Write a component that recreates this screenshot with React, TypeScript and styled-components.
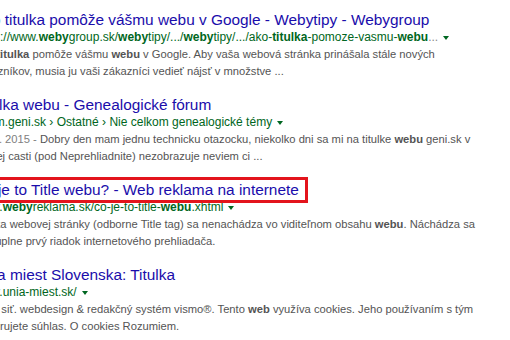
import * as React from 'react'
import styled, { createGlobalStyle, css } from 'styled-components'

const GlobalStyle = createGlobalStyle`
  html, body {
    margin: 0;
    padding: 0;
    background: #fff;
    overflow: hidden;
  }

  body {
    font-family: 'Liberation Sans', Arial, sans-serif;
  }
`

const Results = styled.div`
  padding-top: 11px;
  margin-left: -26px;
  white-space: nowrap;
`

const Result = styled.div`
  margin-bottom: 16px;
`

const Title = styled.h3<{ $marked?: boolean }>`
  display: inline-block;
  position: relative;
  margin: 0;
  font-size: 15.4px;
  font-weight: normal;
  line-height: 17px;
  color: #1a0dab;
  vertical-align: top;

  ${p =>
    p.$marked &&
    css`
      &::after {
        content: '';
        position: absolute;
        top: -4px;
        bottom: -5px;
        left: -10px;
        right: -9px;
        border: 3px solid #e3141c;
      }
    `}
`

const Cite = styled.div`
  font-size: 12px;
  line-height: 17px;
  color: #006621;

  b {
    font-weight: bold;
  }
`

const Dots = styled.span`
  color: #8a8a8a;
`

const Arrow = styled.span`
  display: inline-block;
  margin-left: 5px;
  vertical-align: middle;
  border-top: 4px solid #006621;
  border-left: 3.5px solid transparent;
  border-right: 3.5px solid transparent;
`

const Snippet = styled.div`
  font-size: 11.2px;
  line-height: 17px;
  color: #545454;

  b {
    font-weight: bold;
  }
`

const DateText = styled.span`
  color: #808080;
`

interface ResultData {
  title: string
  marked?: boolean
  url: React.ReactNode
  lines: React.ReactNode[]
}

const results: ResultData[] = [
  {
    title: 'Ako titulka pomôže vášmu webu v Google - Webytipy - Webygroup',
    url: (
      <>
        https://www.<b>weby</b>group.sk/<b>weby</b>tipy/.../<b>weby</b>tipy/.../ako-<b>titulka</b>-pomoze-vasmu-
        <b>webu</b>
        <Dots>...</Dots>
      </>
    ),
    lines: [
      <>
        Ako <b>titulka</b> pomôže vášmu <b>webu</b> v Google. Aby vaša webová stránka prinášala stále nových
      </>,
      <>zákazníkov, musia ju vaši zákazníci vedieť nájsť v množstve ...</>
    ]
  },
  {
    title: 'Titulka webu - Genealogické fórum',
    url: <>forum.geni.sk › Ostatné › Nie celkom genealogické témy</>,
    lines: [
      <>
        <DateText>27. 5. 2015 - </DateText>Dobry den mam jednu technicku otazocku, niekolko dni sa mi na titulke{' '}
        <b>webu</b> geni.sk v
      </>,
      <>hornej casti (pod Neprehliadnite) nezobrazuje neviem ci ...</>
    ]
  },
  {
    title: 'Čo je to Title webu? - Web reklama na internete',
    marked: true,
    url: (
      <>
        www.<b>weby</b>reklama.sk/co-je-to-title-<b>webu</b>.xhtml
      </>
    ),
    lines: [
      <>
        Titulka webovej stránky (odborne Title tag) sa nenachádza vo viditeľnom obsahu <b>webu</b>. Náchádza sa
      </>,
      <>ako úplne prvý riadok internetového prehliadača.</>
    ]
  },
  {
    title: 'Únia miest Slovenska: Titulka',
    url: <>www.unia-miest.sk/</>,
    lines: [
      <>
        obec siť. webdesign &amp; redakčný systém vismo®. Tento <b>web</b> využíva cookies. Jeho používaním s tým
      </>,
      <>vyjadrujete súhlas. O cookies Rozumiem.</>
    ]
  }
]

const App: React.FunctionComponent = () => (
  <>
    <GlobalStyle />
    <Results>
      {results.map((r, i) => (
        <Result key={i}>
          <Title $marked={r.marked}>{r.title}</Title>
          <Cite>
            {r.url}
            <Arrow />
          </Cite>
          {r.lines.map((line, j) => (
            <Snippet key={j}>{line}</Snippet>
          ))}
        </Result>
      ))}
    </Results>
  </>
)

export { App as default }
